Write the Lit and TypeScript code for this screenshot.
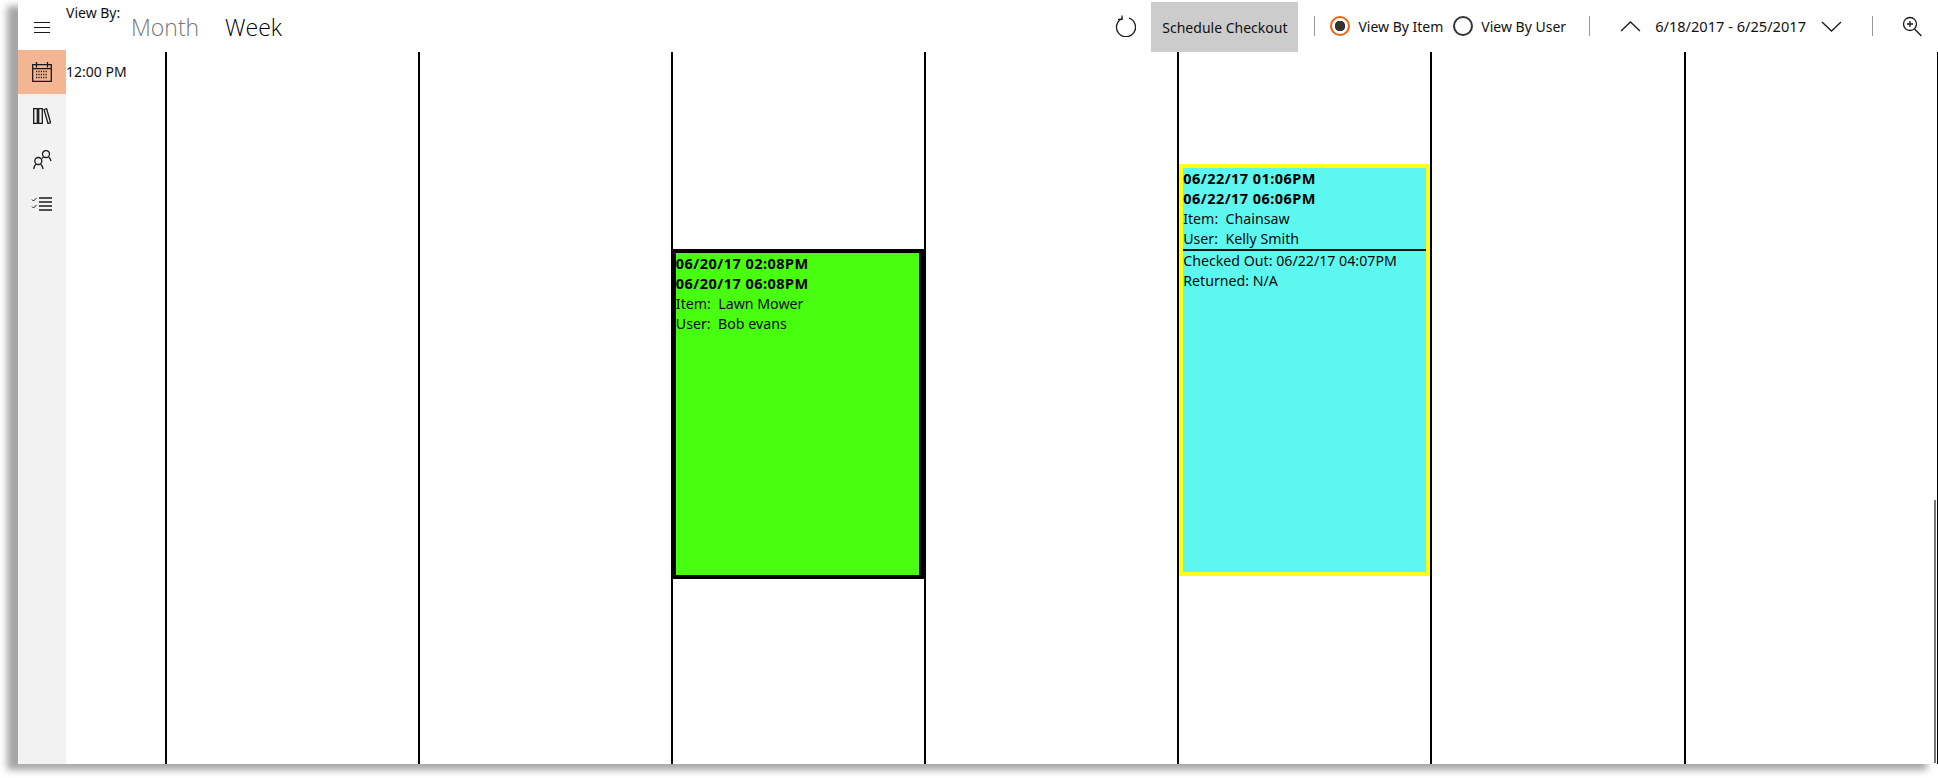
import {LitElement, html, css, svg} from 'lit';
import {customElement} from 'lit/decorators.js';

const icons = {
  menu: svg`<path d="M1 4.500h16M1 9.500h16M1 14.500h16" stroke-width="1" />`,
  calendar: svg`<path d="M.7 2.700h18.600v16.600H.7zM.7 6.700h18.600M4.500 0v5.500M15.500 0v5.500" />
    <path d="M4 9.500h12M4 12.500h12M4 15.500h12" stroke-dasharray="1.200 1.200" stroke-width="1.500" />`,
  books: svg`<path d="M.7 .7h3.600v14.600H.7zM5.700 .7h3.600v14.600H5.700zM11 1.500l2.600-.8 4 14-2.600 .8z" />`,
  users: svg`<circle cx="5.300" cy="11" r="3.500" /><circle cx="13" cy="4" r="3.500" />
    <path d="M.7 19c.3-2 1.200-4 2.500-5M7.500 14c1.300 1 2.200 3 2.500 5M15.500 7c1 .7 2 2 2.500 4M10.500 7c-.5 .5-1 1-1.500 1.300" />`,
  list: svg`<path d="M8 1h13M8 5h13M8 9h13M8 13h13" stroke-width="1.500" />
    <path d="M1 2.500l1.500 1.500 3-3M1 9.500l1.500 1.500 3-3" stroke-width="1" />`,
  refresh: svg`<path d="M7.500 3.400a9.500 9.500 0 1 0 6.500-.2" /><path d="M7 .5v3.800H3" />`,
  up: svg`<path d="M1 11l9.500-9 9.500 9" />`,
  down: svg`<path d="M1 2l9.500 9 9.500-9" />`,
  zoom: svg`<circle cx="8" cy="8" r="6.500" /><path d="M12.500 13l7 7M8 5v6M5 8h6" />`,
};

interface Booking {
  column: number;
  tone: string;
  start: string;
  end: string;
  item: string;
  user: string;
  checkedOut?: string;
  returned?: string;
}

const bookings: Booking[] = [
  {column: 2, tone: 'green', start: '06/20/17 02:08PM', end: '06/20/17 06:08PM', item: 'Lawn Mower', user: 'Bob evans'},
  {
    column: 4,
    tone: 'cyan',
    start: '06/22/17 01:06PM',
    end: '06/22/17 06:06PM',
    item: 'Chainsaw',
    user: 'Kelly Smith',
    checkedOut: '06/22/17 04:07PM',
    returned: 'N/A',
  },
];

@customElement('app-root')
class AppRoot extends LitElement {
  static override styles = css`
    :host {
      display: block;
      width: 1938px;
      height: 778px;
      overflow: hidden;
      background: #fff;
      font-family: 'Noto Sans', 'Open Sans', sans-serif;
      font-size: 14px;
      color: #111;
    }

    .window {
      display: grid;
      grid-template-columns: 48px 1fr;
      grid-template-rows: 50px 1fr;
      width: 1920px;
      height: 764px;
      margin-left: 18px;
      background: #fff;
      box-shadow: -11px 6px 7px #a6a6a6;
      position: relative;
    }

    .icon {
      display: block;
      fill: none;
      stroke: #1a1a1a;
      stroke-width: 1.300;
    }

    .burger {
      display: flex;
      align-items: center;
      justify-content: center;
      padding-top: 4px;
    }

    .header {
      display: flex;
      align-items: flex-start;
    }

    .view-by {
      margin-top: 4px;
      font-size: 14px;
      line-height: 18px;
      width: 65px;
    }

    .mode {
      margin-top: 9px;
      font-size: 23px;
      line-height: 36px;
      font-weight: 300;
      font-family: 'Open Sans', sans-serif;
      color: #000;
    }

    .mode--month {
      width: 94px;
      color: #777;
    }

    .tools {
      display: flex;
      align-items: center;
      height: 52px;
      margin-left: auto;
      padding-right: 16px;
    }

    .tools .icon {
      flex: none;
    }

    .schedule {
      align-self: flex-end;
      display: flex;
      align-items: center;
      justify-content: center;
      box-sizing: border-box;
      width: 147px;
      height: 50px;
      margin: 0 16px 0 15px;
      background: #ccc;
      white-space: nowrap;
    }

    .divider {
      flex: none;
      width: 1px;
      height: 20px;
      background: #999;
    }

    .radio {
      flex: none;
      box-sizing: border-box;
      width: 20px;
      height: 20px;
      margin-right: 8px;
      border: 2px solid #333;
      border-radius: 50%;
    }

    .radio--on {
      border-color: #e8630f;
      background: radial-gradient(circle, #333 5px, transparent 5.500px);
    }

    .radio-label {
      white-space: nowrap;
    }

    .dates {
      white-space: nowrap;
      margin: 0 15px 0 14px;
      font-size: 14.600px;
    }

    .sidebar {
      background: #f2f2f2;
    }

    .nav-item {
      display: flex;
      align-items: center;
      justify-content: center;
      height: 44px;
    }

    .nav-item--active {
      background: #f4b592;
    }

    .content {
      display: grid;
      grid-template-columns: 98.500px repeat(8, 253.180px);
      padding-top: 2px;
      min-width: 0;
    }

    .time {
      padding-top: 10px;
      font-size: 14px;
      line-height: 19px;
    }

    .day {
      border-left: 2px solid #000;
      min-width: 0;
    }

    .booking {
      box-sizing: border-box;
      font-size: 14.200px;
      line-height: 20px;
      color: #0a0a0a;
    }

    .booking--green {
      margin: 197px 0 0 -2px;
      height: 330px;
      border: 4px solid #000;
      border-width: 4px 5px;
      background: #48ff10;
    }

    .booking--cyan {
      margin-top: 112px;
      height: 412px;
      border: 4px solid #ffff14;
      background: #5cf8f0;
    }

    .booking b {
      display: block;
      font-size: 14.500px;
      letter-spacing: 0.450px;
      font-weight: 700;
      color: #000;
    }

    .booking b + b {
      margin-bottom: 1px;
    }

    .booking__rule {
      border-top: 2px solid #111;
    }

    .scrollbar {
      position: absolute;
      right: 2px;
      top: 500px;
      width: 2px;
      height: 263px;
      background: #777;
    }
  `;

  private icon(body: unknown, w: number, h: number) {
    return html`<svg class="icon" width=${w} height=${h} viewBox="0 0 ${w} ${h}">${body}</svg>`;
  }

  private renderBooking(b: Booking) {
    return html`
      <div class="booking booking--${b.tone}">
        <b>${b.start}</b>
        <b>${b.end}</b>
        <div>Item:&nbsp; ${b.item}</div>
        <div>User:&nbsp; ${b.user}</div>
        ${b.checkedOut
          ? html`<div class="booking__rule">Checked Out: ${b.checkedOut}</div>
              <div>Returned: ${b.returned}</div>`
          : ''}
      </div>
    `;
  }

  override render() {
    // the eighth column only shows its left line at the window's right edge
    const days = [0, 1, 2, 3, 4, 5, 6, 7];
    return html`
      <div class="window">
        <div class="burger">${this.icon(icons.menu, 18, 18)}</div>
        <div class="header">
          <div class="view-by">View By:</div>
          <div class="mode mode--month">Month</div>
          <div class="mode">Week</div>
          <div class="tools">
            ${this.icon(icons.refresh, 21, 22)}
            <div class="schedule">Schedule Checkout</div>
            <div class="divider"></div>
            <div class="radio radio--on" style="margin-left:15px"></div>
            <div class="radio-label">View By Item</div>
            <div class="radio" style="margin-left:10px"></div>
            <div class="radio-label">View By User</div>
            <div class="divider" style="margin:0 30px 0 23px"></div>
            ${this.icon(icons.up, 21, 13)}
            <div class="dates">6/18/2017 - 6/25/2017</div>
            ${this.icon(icons.down, 21, 13)}
            <div class="divider" style="margin:0 29px 0 30px"></div>
            ${this.icon(icons.zoom, 20, 21)}
          </div>
        </div>
        <div class="sidebar">
          <div class="nav-item nav-item--active">${this.icon(icons.calendar, 20, 20)}</div>
          <div class="nav-item">${this.icon(icons.books, 18, 16)}</div>
          <div class="nav-item">${this.icon(icons.users, 19, 20)}</div>
          <div class="nav-item">${this.icon(icons.list, 22, 15)}</div>
        </div>
        <div class="content">
          <div class="time">12:00 PM</div>
          ${days.map(
            (d) => html`<div class="day">
              ${bookings.filter((b) => b.column === d).map((b) => this.renderBooking(b))}
            </div>`
          )}
        </div>
        <div class="scrollbar"></div>
      </div>
    `;
  }
}

declare global {
  interface HTMLElementTagNameMap {
    'app-root': AppRoot;
  }
}
